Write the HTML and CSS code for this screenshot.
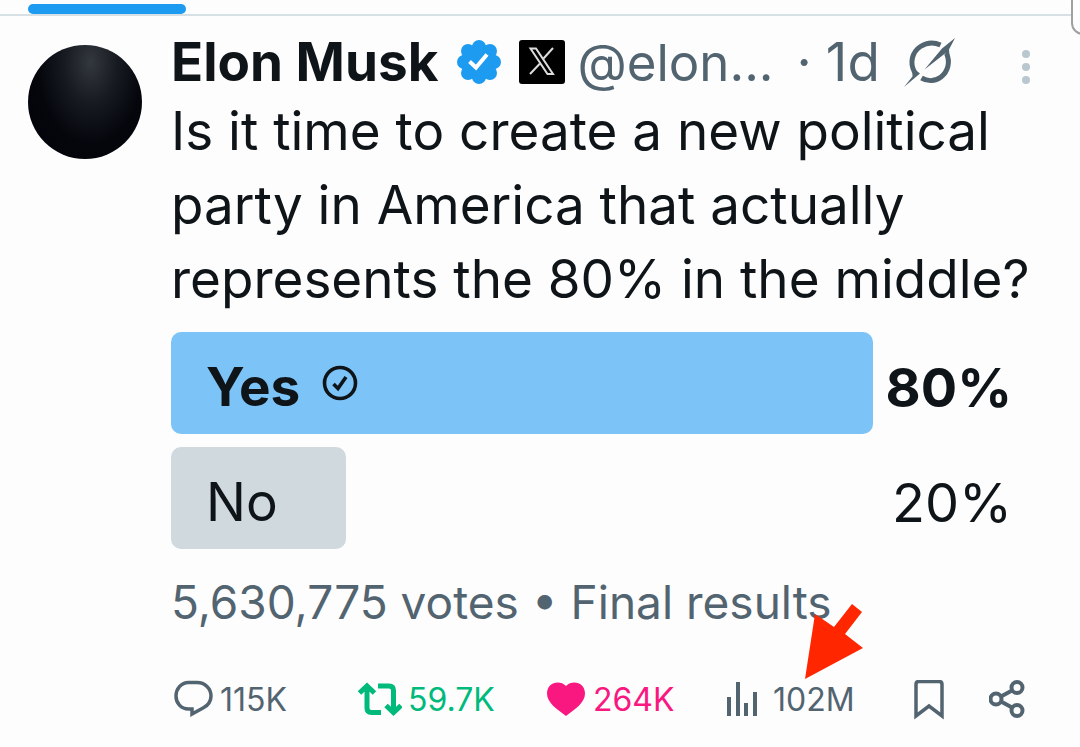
FILE: index.html
```html
<!DOCTYPE html>
<html lang="en">
<head>
  <meta charset="utf-8">
  <meta name="viewport" content="width=device-width, initial-scale=1.0">
  <title>Post</title>
  <link rel="stylesheet" href="styles.css">
</head>
<body>
<div class="tabs">
  <div class="tab-indicator"></div>
</div>
<div class="side-box"></div>

<article class="post">
  <div class="avatar"></div>
  <div class="content">
    <header class="post-header">
      <span class="name">Elon Musk</span>
      <svg class="verified" viewBox="0 0 46 46" role="img" aria-label="Verified">
        <g fill="#1d9bf0">
          <circle cx="23" cy="23" r="18"/>
          <circle cx="23" cy="8" r="7"/>
          <circle cx="34" cy="12" r="7"/>
          <circle cx="38" cy="23" r="7"/>
          <circle cx="34" cy="34" r="7"/>
          <circle cx="23" cy="38" r="7"/>
          <circle cx="12" cy="34" r="7"/>
          <circle cx="8" cy="23" r="7"/>
          <circle cx="12" cy="12" r="7"/>
        </g>
        <path d="M13.500 22.500l6.500 6 11-13" fill="none" stroke="#fff" stroke-width="4"/>
      </svg>
      <svg class="badge" viewBox="0 0 46 46" role="img" aria-label="X">
        <rect width="46" height="44" y="1" rx="3" fill="#000"/>
        <g fill="none" stroke="#ddd" stroke-width="2">
          <path d="M11.500 9.500h5.500l17 25.500h-5.500z"/>
          <path d="M34 9L24.500 19.500M21 24.500L11 35"/>
        </g>
      </svg>
      <span class="handle">@elon...</span>
      <span class="dot">·</span>
      <span class="time">1d</span>
      <button class="icon-button grok" aria-label="Explain this post">
        <svg viewBox="0 0 52 50">
          <g fill="none" stroke="#536471" stroke-width="5">
            <path d="M10.500 35C5.500 26 8 15 16.500 9.500C23 5.300 30 5 36.500 8"/>
            <path d="M42.500 16.500C46.500 25 44 34.500 37 40C31 44.500 23.500 44.500 17.500 41"/>
          </g>
          <path d="M51 1L45 12.500 45.500 19 41 16.500 20.500 32.500 38 11.500zM0 50L8.500 39.500 8 30 16 36.500z" fill="#536471"/>
        </svg>
      </button>
      <button class="icon-button more" aria-label="More">
        <svg viewBox="0 0 10 36" fill="#b9c7cf">
          <circle cx="5" cy="5" r="4"/>
          <circle cx="5" cy="18" r="4"/>
          <circle cx="5" cy="31" r="4"/>
        </svg>
      </button>
    </header>

    <p class="text">Is it time to create a new political party in America that actually represents the 80% in the middle?</p>

    <div class="poll">
      <div class="option winner">
        <div class="bar" style="width: 80%">
          <span>Yes</span>
          <svg class="voted" viewBox="0 0 36 36" fill="none" stroke="#0f1419" role="img" aria-label="Your vote">
            <circle cx="18" cy="18" r="15.500" stroke-width="3.600"/>
            <path d="M11.500 19l4.500 4.500 8-11.500" stroke-width="3.600"/>
          </svg>
        </div>
        <span class="percent">80%</span>
      </div>
      <div class="option">
        <div class="bar" style="width: 20%">
          <span>No</span>
        </div>
        <span class="percent">20%</span>
      </div>
    </div>

    <p class="votes">5,630,775 votes • Final results</p>

    <div class="actions">
      <button class="action">
        <svg class="icon" viewBox="0 0 40 40" fill="none" stroke="#536471" stroke-width="3.500">
          <path d="M14.500 2.500H23C31 2.500 37 8.500 37 16C37 21.500 34 25.500 29 28L18 34V29H14.500C7 29 2 23 2 16S7 2.500 14.500 2.500z"/>
        </svg>
        <span>115K</span>
      </button>
      <button class="action reposted">
        <svg class="icon wide" viewBox="0 0 44 40" fill="none" stroke="#00ba7c" stroke-width="5">
          <path d="M1.500 13l7.500-7 7.500 7M9 6v22c0 3 1.500 4.500 4.500 4.500h9.500M20 6h11c3 0 4.500 1.500 4.500 4.500v22M28 25.500l7.500 7 7.500-7"/>
        </svg>
        <span>59.7K</span>
      </button>
      <button class="action liked">
        <svg class="icon" viewBox="0 0 40 40" fill="#f91880">
          <path d="M19 36C10.500 29.500 0 23 0 13.500C0 2.500 12.500 -.500 19 6C25.500 -.500 38 2.500 38 13.500C38 23 27.500 29.500 19 36z"/>
        </svg>
        <span>264K</span>
      </button>
      <button class="action">
        <svg class="icon" viewBox="0 0 40 40" fill="#536471">
          <path d="M0 17h4v19H0zM9 2h4v34H9zM17 23h4v13h-4zM26 12h4v24h-4z"/>
        </svg>
        <span>102M</span>
      </button>
      <button class="action" aria-label="Bookmark">
        <svg class="icon" viewBox="0 0 40 40" fill="none" stroke="#536471" stroke-width="3.500">
          <path d="M2 36V4.500C2 2.500 3 1.500 5 1.500H25C27 1.500 28 2.500 28 4.500V36L15 26z"/>
        </svg>
      </button>
      <button class="action" aria-label="Share">
        <svg class="icon" viewBox="0 0 40 40" fill="none" stroke="#536471" stroke-width="4">
          <circle cx="7" cy="19" r="5.500"/>
          <circle cx="28" cy="7.500" r="5.500"/>
          <circle cx="28" cy="30.500" r="5.500"/>
          <path d="M12 16.500L23 10.500M12 21.500L23 27.500"/>
        </svg>
      </button>
    </div>
  </div>
</article>

<svg class="arrow" viewBox="0 0 58 75">
  <path d="M0 75L10 10 29 23 47 0 57 8 40 30 58 44z" fill="#ff2600"/>
</svg>
</body>
</html>
```
FILE: styles.css
```css
* {
  box-sizing: border-box;
}
body {
  margin: 0;
  background: #fdfdfd;
  color: #0f1419;
  font-family: Inter, "Liberation Sans", sans-serif;
  overflow-x: hidden;
}
p {
  margin: 0;
}
button {
  padding: 0;
  border: 0;
  background: none;
  font: inherit;
  color: inherit;
}
svg {
  display: block;
  flex: none;
}
.tabs {
  padding: 4px 28px 0;
  border-bottom: 2px solid #d6e0e5;
}
.tab-indicator {
  width: 158px;
  height: 10px;
  border-radius: 5px;
  background: #1d9bf0;
}
.side-box {
  position: absolute;
  top: -20px;
  right: -20px;
  width: 29px;
  height: 55px;
  border: 2px solid #a0a0a0;
  border-radius: 12px;
  background: #fdfdfd;
}
.post {
  display: flex;
  gap: 29px;
  padding: 10px 32px 0 28px;
}
.avatar {
  flex: none;
  width: 114px;
  height: 114px;
  margin-top: 19px;
  border-radius: 50%;
  background: radial-gradient(ellipse at 55% 15%, #33373e 0%, #171a21 30%, #04060c 60%, #02030a 100%);
}
.content {
  flex: 1;
  min-width: 0;
}
.post-header {
  display: flex;
  align-items: center;
  height: 72px;
  font-size: 53px;
  color: #536471;
}
.name {
  margin-right: 18px;
  font-weight: 700;
  color: #0f1419;
}
.verified, .badge {
  width: 46px;
  height: 46px;
}
.badge {
  margin: 0 12px 0 17px;
}
.handle {
  font-size: 51px;
}
.dot {
  margin: 0 14px 0 23px;
}
.grok {
  margin-left: 24px;
}
.grok svg {
  width: 52px;
  height: 50px;
}
.more {
  margin: 10px 17px 0 auto;
}
.more svg {
  width: 10px;
  height: 36px;
}
.text {
  margin-top: -4px;
  font-size: 53px;
  line-height: 74px;
}
.poll {
  display: grid;
  gap: 13px;
  margin-top: 16px;
  font-size: 53px;
}
.option {
  display: grid;
  align-items: center;
}
.bar, .percent {
  grid-area: 1 / 1;
}
.bar {
  display: flex;
  align-items: center;
  gap: 22px;
  height: 102px;
  padding: 8px 35px 0;
  border-radius: 10px;
  background: #cfd9de;
}
.percent {
  justify-self: end;
  padding: 8px 36px 0 0;
  font-size: 54px;
}
.winner {
  font-weight: 700;
}
.winner .bar {
  background: #7cc4f8;
}
.voted {
  width: 36px;
  height: 36px;
  margin-bottom: 8px;
}
.votes {
  margin-top: 21px;
  font-size: 46px;
  line-height: 64px;
  color: #536471;
}
.actions {
  display: grid;
  grid-template-columns: 184fr 189fr 180fr 187fr 75fr 59fr;
  margin-top: 46px;
  padding-left: 3px;
}
.action {
  display: flex;
  align-items: center;
  gap: 6px;
  font-size: 32px;
  line-height: 40px;
  color: #536471;
}
.icon {
  width: 40px;
  height: 40px;
}
.icon.wide {
  width: 44px;
}
.reposted {
  color: #00ba7c;
}
.liked {
  color: #f91880;
}
.arrow {
  position: absolute;
  top: 604px;
  left: 805px;
  width: 58px;
  height: 75px;
}
```
